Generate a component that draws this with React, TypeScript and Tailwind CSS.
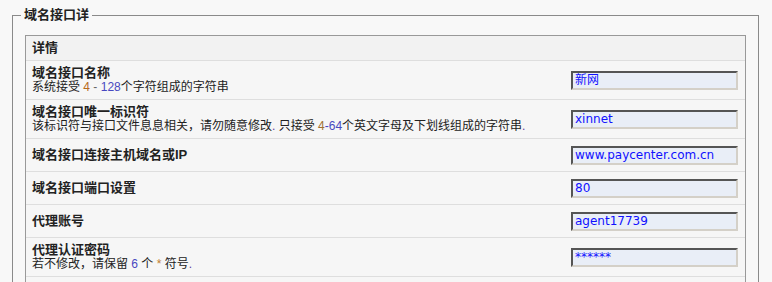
import React from "react";

const cjk = { fontFamily: '"Liberation Sans", "Noto Sans CJK SC", sans-serif' };
const inp = { fontFamily: '"DejaVu Sans", "Noto Sans CJK SC", sans-serif' };

type Row = { label: React.ReactNode; desc?: React.ReactNode; value: string; h: string };

const rows: Row[] = [
  {
    label: "域名接口名称",
    desc: (
      <>
        系统接受 <span className="text-[#b86a1c]">4</span>
        <span className="text-[#666]"> - </span>
        <span className="text-[#4848c0]">128</span>个字符组成的字符串
      </>
    ),
    value: "新网",
    h: "h-[39px]",
  },
  {
    label: "域名接口唯一标识符",
    desc: (
      <>
        该标识符与接口文件息息相关，请勿随意修改<span className="text-[#6040a0]">.</span> 只接受{" "}
        <span className="text-[#a07030]">4</span>
        <span className="text-[#4848c0]">-64</span>个英文字母及下划线组成的字符串
        <span className="text-[#6040a0]">.</span>
      </>
    ),
    value: "xinnet",
    h: "h-[39px]",
  },
  { label: "域名接口连接主机域名或IP", value: "www.paycenter.com.cn", h: "h-[33px]" },
  { label: "域名接口端口设置", value: "80", h: "h-[33px]" },
  { label: "代理账号", value: "agent17739", h: "h-[33px]" },
  {
    label: "代理认证密码",
    desc: (
      <>
        若不修改，请保留 <span className="text-[#4848c0]">6</span> 个{" "}
        <span className="text-[#c08030]">*</span> 符号<span className="text-[#6040a0]">.</span>
      </>
    ),
    value: "******",
    h: "h-[39px]",
  },
];

export default function App() {
  return (
    <div className="min-h-screen bg-[#f8f8f8] pt-[8px]" style={cjk}>
      <fieldset className="ml-[12px] mr-[13px] border border-[#8a8a8a] px-[12px] pt-[13px] pb-[10px]">
        <legend className="ml-[-4px] px-[3px] text-[13px] font-bold leading-[14px] text-[#222]">
          域名接口详
        </legend>
        <div className="border border-[#999] bg-[#f6f6f6]">
          <div className="flex h-[25px] items-center border-b border-[#dedede] bg-[#f2f2f2] pl-[6px] text-[13px] font-bold text-[#222]">
            详情
          </div>
          {rows.map((r, i) => (
            <div
              key={i}
              className={`flex ${r.h} items-center justify-between border-b border-[#dedede] pl-[6px] pr-[7px]`}
            >
              <div className="flex flex-col text-[#222]">
                <div className="text-[13px] font-bold leading-[14px]">{r.label}</div>
                {r.desc && <div className="text-[12px] leading-[14px]">{r.desc}</div>}
              </div>
              <div
                className="flex h-[19px] w-[167px] items-center border-2 border-t-[#555] border-l-[#555] border-r-[#d4d0c8] border-b-[#d4d0c8] bg-[#e9eef7] pl-[2px] text-[12px] text-[#1010ff]"
                style={inp}
              >
                {r.value}
              </div>
            </div>
          ))}
          <div className="h-[33px]" />
        </div>
      </fieldset>
    </div>
  );
}
